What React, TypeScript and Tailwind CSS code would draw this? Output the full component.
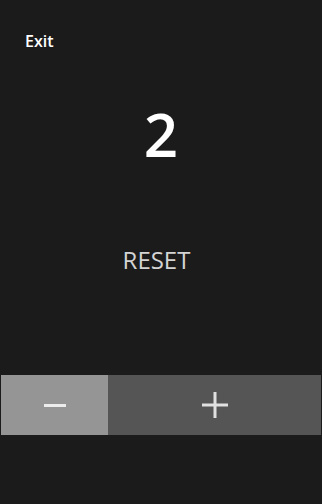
export default function App() {
  return (
    <div
      className="w-[322px] h-[504px] bg-[#1b1b1b] flex flex-col text-white"
      style={{ fontFamily: '"Open Sans", "Noto Sans", sans-serif' }}
    >
      <div className="pt-[29px] pl-[25px] h-[70px]">
        <button className="text-[16px] font-semibold leading-5 text-white">Exit</button>
      </div>
      <div className="flex justify-center mt-[24px]">
        <span className="text-[60px] leading-[80px] font-semibold">2</span>
      </div>
      <div className="flex justify-center mt-[70px] pr-[9px]">
        <button className="text-[24px] leading-8 text-[#d4d4d4]">RESET</button>
      </div>
      <div className="flex mt-[99px] mx-[1px] h-[60px]">
        <button className="w-[107px] bg-[#959595] flex items-center justify-center">
          <span className="block w-[22px] h-[3px] bg-[#ececec]" />
        </button>
        <button className="flex-1 bg-[#555555] flex items-center justify-center">
          <svg width="26" height="26" viewBox="0 0 26 26">
            <rect x="0" y="11.5" width="26" height="3" fill="#e0e0e0" />
            <rect x="11.5" y="0" width="3" height="26" fill="#e0e0e0" />
          </svg>
        </button>
      </div>
    </div>
  );
}
